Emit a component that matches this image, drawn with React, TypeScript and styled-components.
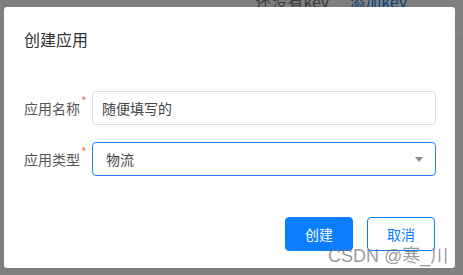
import React from "react";
import styled, { createGlobalStyle } from "styled-components";

const Global = createGlobalStyle`
  html, body { margin: 0; padding: 0; }
  body {
    background: #7f7f7f;
    font-family: "Noto Sans CJK SC", "Noto Sans", sans-serif;
    width: 463px;
    height: 275px;
    overflow: hidden;
  }
`;

const Page = styled.div`
  position: relative;
  width: 463px;
  height: 275px;
  overflow: hidden;
`;

const BehindBar = styled.div`
  display: flex;
  justify-content: flex-end;
  gap: 20px;
  padding-right: 56px;
  margin-top: -10px;
  height: 44px;
  border-bottom: 1px solid #868686;
  box-sizing: border-box;
  font-size: 16px;
  line-height: 22px;
`;

const BehindText = styled.span<{ $link?: boolean }>`
  color: ${(p) => (p.$link ? "#0a3f80" : "#3c3c3c")};
`;

const Modal = styled.div`
  position: absolute;
  left: 4px;
  top: 7px;
  width: 451px;
  height: 261px;
  background: #fff;
  border-radius: 3px;
  box-sizing: border-box;
  padding: 20px 20px 0 20px;
  display: flex;
  flex-direction: column;
`;

const Title = styled.div`
  font-size: 16px;
  line-height: 24px;
  color: #333;
`;

const Form = styled.div`
  margin-top: 40px;
  display: flex;
  flex-direction: column;
  gap: 17px;
`;

const Row = styled.div`
  display: flex;
  align-items: center;
`;

const Label = styled.label`
  width: 68px;
  font-size: 14px;
  color: #555;
  display: flex;
  align-items: flex-start;
`;

const Star = styled.span`
  color: #f56c6c;
  font-size: 12px;
  line-height: 14px;
  margin-left: 1px;
  margin-top: -4px;
`;

const Field = styled.div<{ $focus?: boolean; $pad: number }>`
  flex: 1;
  height: 34px;
  box-sizing: border-box;
  border: 1px solid ${(p) => (p.$focus ? "#1e7bff" : "#dcdfe6")};
  border-radius: 4px;
  display: flex;
  align-items: center;
  justify-content: space-between;
  padding: 0 12px 0 ${(p) => p.$pad}px;
  font-size: 14px;
  color: #444;
  margin-right: -1px;
`;

const Caret = styled.span`
  width: 0;
  height: 0;
  border-left: 4px solid transparent;
  border-right: 4px solid transparent;
  border-top: 5px solid #8c8c8c;
`;

const Footer = styled.div`
  margin-top: 41px;
  display: flex;
  justify-content: flex-end;
  gap: 14px;
`;

const Button = styled.button<{ $primary?: boolean }>`
  width: 68px;
  height: 34px;
  border-radius: 4px;
  font-family: inherit;
  font-size: 14px;
  cursor: pointer;
  border: 1px solid #0b7dff;
  background: ${(p) => (p.$primary ? "#0b7dff" : "#fff")};
  color: ${(p) => (p.$primary ? "#fff" : "#0b7dff")};
  padding: 0;
`;

const Watermark = styled.div`
  position: absolute;
  left: 328px;
  top: 246px;
  font-family: "Liberation Sans", "Noto Sans CJK SC", sans-serif;
  font-size: 18px;
  line-height: 20px;
  color: rgba(120, 120, 120, 0.75);
  white-space: nowrap;
`;

export default function App() {
  return (
    <Page>
      <Global />
      <BehindBar>
        <BehindText>还没有key</BehindText>
        <BehindText $link>添加key</BehindText>
      </BehindBar>
      <Modal>
        <Title>创建应用</Title>
        <Form>
          <Row>
            <Label>
              应用名称<Star>*</Star>
            </Label>
            <Field $pad={9}>随便填写的</Field>
          </Row>
          <Row>
            <Label>
              应用类型<Star>*</Star>
            </Label>
            <Field $focus $pad={13}>
              <span>物流</span>
              <Caret />
            </Field>
          </Row>
        </Form>
        <Footer>
          <Button $primary>创建</Button>
          <Button>取消</Button>
        </Footer>
      </Modal>
      <Watermark>CSDN @寒_川</Watermark>
    </Page>
  );
}
